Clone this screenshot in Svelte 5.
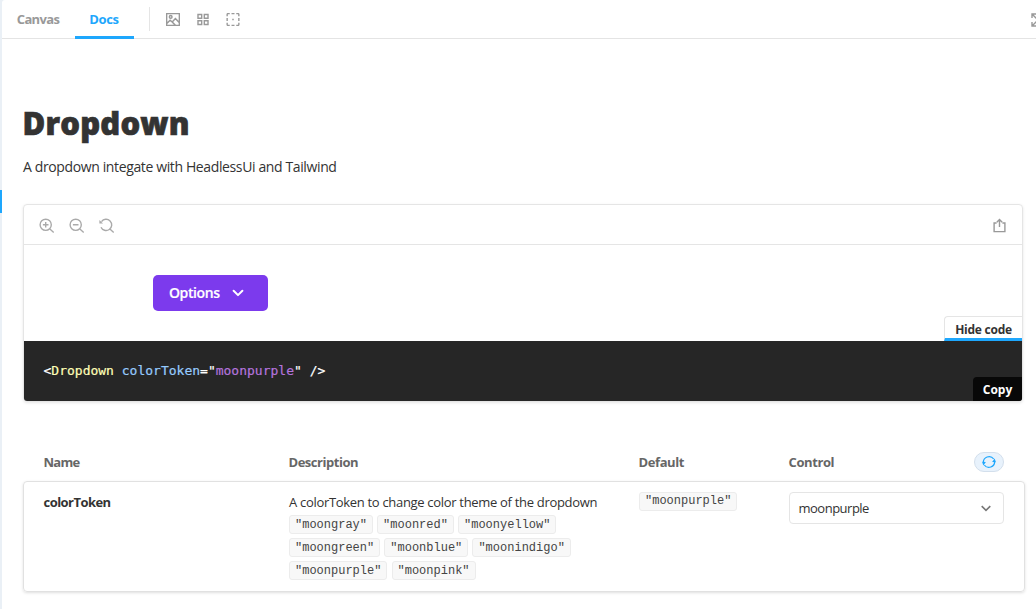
<script>
  const valueRows = [
    ['moongray', 'moonred', 'moonyellow'],
    ['moongreen', 'moonblue', 'moonindigo'],
    ['moonpurple', 'moonpink']
  ];
</script>

<div class="shell">
  <div class="rail"><span class="marker"></span></div>
  <main>
    <header>
      <nav>
        <button class="tab canvas">Canvas</button>
        <button class="tab docs active">Docs</button>
      </nav>
      <span class="divider"></span>
      <div class="tools">
        <svg width="14" height="13" viewBox="0 0 14 13"><path d="M.6.6h12.8v11.8H.6z M1 10.3 4.1 7.2l2.1 1.8 3.2-3.5L13.2 9.6 M6.2 9l3.2 3.2" /><circle cx="4.7" cy="3.9" r="1.3" /></svg>
        <svg width="14" height="13" viewBox="0 0 14 14"><path d="M1.6 1.6h4v4h-4z M8.4 1.6h4v4h-4z M1.6 8.4h4v4h-4z M8.4 8.4h4v4h-4z" /></svg>
        <svg width="14" height="13" viewBox="0 0 14 14"><path d="M.7 3.5V1.5q0-.8.8-.8h2 M5.4.7h3.2 M10.5.7h2q.8 0 .8.8v2 M13.3 5.4v3.2 M13.3 10.5v2q0 .8-.8.8h-2 M8.6 13.3H5.4 M3.5 13.3h-2q-.8 0-.8-.8v-2 M.7 8.6V5.4" /><path d="M7 6.2v1.6M6.2 7h1.6" /></svg>
      </div>
      <svg class="expand" width="14" height="14" viewBox="0 0 14 14"><path d="M1 5V1h4M1 1l4.5 4.5M9 1h4v4M13 1 8.5 5.5M1 9v4h4M1 13l4.5-4.5M9 13h4V9M13 13 8.5 8.5" /></svg>
    </header>

    <article>
      <h1>Dropdown</h1>
      <p class="intro">A dropdown integate with HeadlessUi and Tailwind</p>

      <section class="preview">
        <div class="previewbar">
          <div class="zoomers">
            <svg width="16" height="16" viewBox="0 0 16 16"><circle cx="6.7" cy="6.8" r="5.6" /><path d="M10.9 11 14.7 14.5M6.7 4v5.6M3.9 6.8h5.6" /></svg>
            <svg width="16" height="16" viewBox="0 0 16 16"><circle cx="6.7" cy="6.8" r="5.6" /><path d="M10.9 11 14.7 14.5M3.9 6.8h5.6" /></svg>
            <svg width="16" height="16" viewBox="0 0 16 16"><path d="M2.5 3.7A5.6 5.6 0 1 1 2 9.2M10.9 11 14.7 14.5" /><path class="solid" d="M.4 2v3.6H4z" /></svg>
          </div>
          <svg class="share" width="14" height="16" viewBox="0 0 14 16"><path d="M4.6 5H2.1v8.6h10.8V5h-2.5M7.5 9V1.8M4.8 4.2l2.7-2.7 2.7 2.7" /></svg>
        </div>
        <div class="stage">
          <button class="options"><span>Options</span>
            <svg width="12" height="8" viewBox="0 0 12 8"><path d="m1.6 1.7 4.4 4.4 4.4-4.4" /></svg>
          </button>
          <button class="hide"><span>Hide code</span></button>
        </div>
        <div class="source">
          <code><span class="w">&lt;</span><span class="tag">Dropdown</span> <span class="attr">colorToken</span><span class="w">="</span><span class="val">moonpurple</span><span class="w">" /&gt;</span></code>
          <button class="copy">Copy</button>
        </div>
      </section>

      <section class="args">
        <div class="row head">
          <span class="hname">Name</span>
          <span class="hdesc">Description</span>
          <span class="hdef">Default</span>
          <span class="control-head"><span class="hctl">Control</span>
            <button class="reset" aria-label="Reset controls"><svg width="14" height="14" viewBox="0 0 14 14"><path d="M1.4 7.8A5.7 5.7 0 0 1 11.7 4M12.6 6.2A5.7 5.7 0 0 1 2.3 10" /><path class="solid" d="m10.1 6.9 2.6-3.3 1.2 3.7zM3.9 7.1 1.3 10.4.1 6.7z" /></svg></button>
          </span>
        </div>
        <div class="row body">
          <strong>colorToken</strong>
          <div>
            <p class="desc">A colorToken to change color theme of the dropdown</p>
            {#each valueRows as values}
              <div class="chips">{#each values as value}<code class="chip">"{value}"</code>{/each}</div>
            {/each}
          </div>
          <div class="default"><code class="chip">"moonpurple"</code></div>
          <button class="select"><span>moonpurple</span>
            <svg width="10" height="7" viewBox="0 0 10 7"><path d="m.7 1.1 4.3 4.2 4.3-4.2" /></svg>
          </button>
        </div>
      </section>
    </article>
  </main>
</div>

<style>
  :global(body) { background: #fff; overflow: hidden; }
  * { box-sizing: border-box; }
  .shell { display: flex; width: 1036px; height: 609px; overflow: hidden; background: #eaf0f6; font-family: "Open Sans", "Noto Sans", sans-serif; font-size: 13px; color: #333; }
  button { font: inherit; color: inherit; border: 0; padding: 0; background: none; }
  p, h1 { margin: 0; white-space: nowrap; }
  svg { display: block; flex: none; fill: none; stroke: currentColor; stroke-width: 1.4; }
  .solid { fill: currentColor; stroke: none; }
  .rail { width: 2px; flex: none; padding-top: 190px; }
  .marker { display: block; height: 23px; background: #1ea7fd; }
  main { width: 1034px; flex: none; background: #fff; border-top-left-radius: 3px; }
  header { display: flex; height: 39px; border-bottom: 1px solid #e4e4e4; color: #999; }
  nav { display: flex; }
  .tab { font-weight: 700; height: 39px; border-bottom: 3px solid transparent; border-top: 1px solid transparent; white-space: nowrap; }
  .canvas { width: 73px; letter-spacing: -.65px; padding-right: 1px; }
  .docs { width: 59px; letter-spacing: -.35px; padding-right: 1px; }
  .active { color: #1ea7fd; border-bottom-color: #1ea7fd; }
  .divider { width: 1px; height: 24px; margin: 7px 0 0 15px; background: #e5e5e5; }
  .tools { display: flex; gap: 16px; padding: 13px 0 0 16px; }
  .tools svg { stroke-width: 1.5; }
  .expand { margin: 13px 0 0 auto; transform: translateX(9px); }
  article { padding: 64px 11px 0 21px; }
  h1 { font-size: 31px; line-height: 40px; font-weight: 800; letter-spacing: .2px; text-indent: -.5px; -webkit-text-stroke: .7px #333; }
  .intro { margin-top: 12px; font-size: 14px; line-height: 24px; letter-spacing: -.375px; }
  .preview { width: 1000px; height: 198px; margin-top: 25px; border: 1px solid #e5e5e5; border-radius: 4px; box-shadow: 0 1px 3px rgba(0,0,0,.1); overflow: hidden; }
  .previewbar { display: flex; justify-content: space-between; height: 40px; border-bottom: 1px solid #e5e5e5; padding: 13px 16px 0 15px; color: #aaa; }
  .zoomers { display: flex; gap: 14px; }
  .share { color: #999; }
  .stage { display: flex; justify-content: space-between; height: 96px; padding: 30px 0 0 129px; }
  .options { display: flex; align-items: center; gap: 12px; width: 115px; height: 36px; padding-left: 16px; border-radius: 5px; background: #7c3aed; color: #fff; font-weight: 600; font-size: 14px; letter-spacing: -.4px; -webkit-text-stroke: .2px; }
  .options span { padding-bottom: 2px; }
  .options svg { stroke-width: 2; stroke-linecap: round; stroke-linejoin: round; }
  .hide { align-self: flex-end; width: 78px; height: 25px; padding-top: 3px; border: 1px solid #e5e5e5; border-right: 0; border-bottom: 3px solid #1ea7fd; border-top-left-radius: 4px; font-size: 12px; font-weight: 700; letter-spacing: -.25px; white-space: nowrap; }
  .source { display: flex; justify-content: space-between; height: 60px; padding-left: 19.5px; background: #262626; }
  .source code { font: 13px/20px "DejaVu Sans Mono", monospace; padding-top: 20px; white-space: pre; color: #fff; -webkit-text-stroke: .2px; }
  .tag { color: #ffffb6; }
  .attr { color: #96cbfe; }
  .val { color: #b474dd; }
  .copy { align-self: flex-end; width: 49px; height: 24px; background: #080808; color: #fff; border-top-left-radius: 4px; font-size: 12px; font-weight: 700; }
  .args { width: 1002px; margin-top: 40px; }
  .row { display: grid; grid-template-columns: 245px 350px 150px 216px; }
  .head { height: 39px; padding: 10px 0 0 20.5px; line-height: 20px; font-weight: 700; color: #666; }
  .hname { letter-spacing: -.7px; }
  .hdesc { letter-spacing: -.47px; }
  .hdef, .hctl { letter-spacing: -.4px; }
  .control-head { display: flex; justify-content: space-between; }
  .reset { display: grid; place-items: center; width: 30px; height: 20px; margin-right: .5px; border: 1px solid #d3dfec; border-radius: 10px; background: #e8f2fc; color: #1ea7fd; }
  .reset svg { stroke-width: 1.2; }
  .body { height: 111px; padding: 10px 0 0 20px; border: 1px solid #e1e1e1; border-radius: 4px; box-shadow: 0 1px 3px rgba(0,0,0,.13); }
  strong { line-height: 20px; letter-spacing: -.55px; text-indent: -.5px; }
  .desc { line-height: 20px; letter-spacing: -.31px; margin-bottom: 3px; }
  .chips { display: flex; gap: 4.1px; height: 23px; }
  .chip { display: block; height: 19px; padding: 0 5px; border: 1px solid #ececec; border-radius: 3px; background: #f8f8f8; color: #444; font: 12px/16px "Liberation Mono", monospace; white-space: nowrap; }
  .chips .chip { line-height: 18px; }
  .default { display: flex; align-items: flex-start; }
  .select { display: flex; align-items: center; justify-content: space-between; width: 215px; height: 32px; padding: 0 12px 0 8.5px; border: 1px solid #e5e5e5; border-radius: 4px; letter-spacing: -.5px; }
  .select svg { color: #777; stroke-width: 1.6; }
</style>
